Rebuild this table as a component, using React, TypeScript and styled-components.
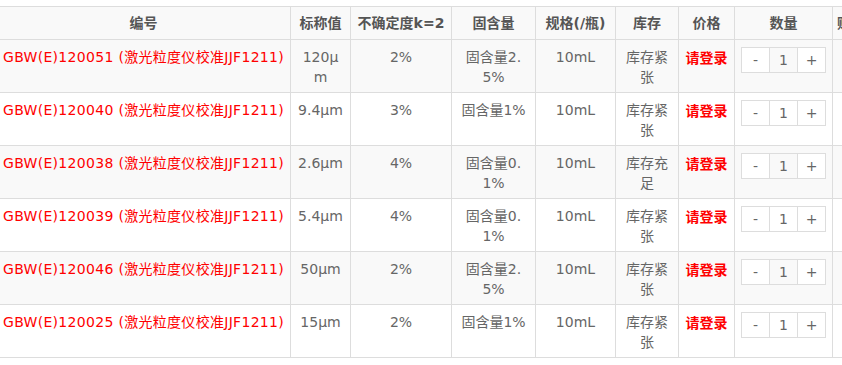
import styled, { createGlobalStyle } from 'styled-components';

const GlobalStyle = createGlobalStyle`
	html, body {
		margin: 0;
		padding: 0;
		background: #fff;
		overflow: hidden;
	}
	body {
		font-family: "DejaVu Sans", "Noto Sans CJK SC", sans-serif;
		font-size: 14px;
		color: #666;
	}
`;

const Page = styled.div`
	width: 842px;
	height: 365px;
	overflow: hidden;
	padding-top: 6px;
	box-sizing: border-box;
`;

const Table = styled.table`
	margin-left: -4px;
	border-collapse: collapse;
	table-layout: fixed;
	width: 946px;
`;

const HeadCell = styled.th<{ $align?: string }>`
	border: 1px solid #ddd;
	background: #f9f9f9;
	color: #555;
	font-weight: bold;
	line-height: 20px;
	padding: 6px 4px;
	text-align: ${(p) => p.$align || 'center'};
	white-space: nowrap;
	overflow: hidden;
`;

const Row = styled.tr<{ $striped: boolean }>`
	background: ${(p) => (p.$striped ? '#f9f9f9' : '#fff')};
`;

const Cell = styled.td<{ $align?: string }>`
	border: 1px solid #ddd;
	vertical-align: top;
	line-height: 20px;
	padding: 7px 6px 5px;
	text-align: ${(p) => p.$align || 'center'};
	white-space: nowrap;
	overflow: hidden;
`;

const ProductLink = styled.span`
	color: #f00;
	letter-spacing: 0.3px;
`;

const Login = styled.span`
	color: #f00;
	font-weight: bold;
	font-family: "Noto Sans CJK SC", sans-serif;
`;

const Counter = styled.div`
	display: inline-flex;
	border: 1px solid #ddd;
	height: 24px;
	vertical-align: top;
`;

const CountBtn = styled.button`
	width: 27px;
	height: 24px;
	border: none;
	padding: 0;
	background: #fff;
	color: #666;
	font-family: inherit;
	font-size: 14px;
	line-height: 24px;
`;

const CountValue = styled.span`
	width: 27px;
	height: 24px;
	border-left: 1px solid #ddd;
	border-right: 1px solid #ddd;
	text-align: center;
	line-height: 24px;
	color: #666;
`;

type Item = {
	code: string;
	value: string[];
	uncertainty: string;
	content: string[];
	spec: string;
	stock: string[];
};

const items: Item[] = [
	{ code: 'GBW(E)120051', value: ['120μ', 'm'], uncertainty: '2%', content: ['固含量2.', '5%'], spec: '10mL', stock: ['库存紧', '张'] },
	{ code: 'GBW(E)120040', value: ['9.4μm'], uncertainty: '3%', content: ['固含量1%'], spec: '10mL', stock: ['库存紧', '张'] },
	{ code: 'GBW(E)120038', value: ['2.6μm'], uncertainty: '4%', content: ['固含量0.', '1%'], spec: '10mL', stock: ['库存充', '足'] },
	{ code: 'GBW(E)120039', value: ['5.4μm'], uncertainty: '4%', content: ['固含量0.', '1%'], spec: '10mL', stock: ['库存紧', '张'] },
	{ code: 'GBW(E)120046', value: ['50μm'], uncertainty: '2%', content: ['固含量2.', '5%'], spec: '10mL', stock: ['库存紧', '张'] },
	{ code: 'GBW(E)120025', value: ['15μm'], uncertainty: '2%', content: ['固含量1%'], spec: '10mL', stock: ['库存紧', '张'] },
];

const Lines = ({ lines }: { lines: string[] }) => (
	<>
		{lines.map((l, i) => (
			<div key={i}>{l}</div>
		))}
	</>
);

const App = () => {
	return (
		<Page>
			<GlobalStyle />
			<Table>
				<colgroup>
					<col style={{ width: 294 }} />
					<col style={{ width: 60 }} />
					<col style={{ width: 101 }} />
					<col style={{ width: 84 }} />
					<col style={{ width: 80 }} />
					<col style={{ width: 63 }} />
					<col style={{ width: 56 }} />
					<col style={{ width: 98 }} />
					<col style={{ width: 110 }} />
				</colgroup>
				<thead>
					<tr>
						<HeadCell>编号</HeadCell>
						<HeadCell>标称值</HeadCell>
						<HeadCell>不确定度k=2</HeadCell>
						<HeadCell>固含量</HeadCell>
						<HeadCell>规格(/瓶)</HeadCell>
						<HeadCell>库存</HeadCell>
						<HeadCell>价格</HeadCell>
						<HeadCell>数量</HeadCell>
						<HeadCell $align="left">购买</HeadCell>
					</tr>
				</thead>
				<tbody>
					{items.map((it, idx) => (
						<Row key={it.code} $striped={idx % 2 === 0}>
							<Cell $align="left">
								<ProductLink>{it.code} (激光粒度仪校准JJF1211)</ProductLink>
							</Cell>
							<Cell>
								<Lines lines={it.value} />
							</Cell>
							<Cell>{it.uncertainty}</Cell>
							<Cell>
								<Lines lines={it.content} />
							</Cell>
							<Cell>{it.spec}</Cell>
							<Cell>
								<Lines lines={it.stock} />
							</Cell>
							<Cell>
								<Login>请登录</Login>
							</Cell>
							<Cell>
								<Counter>
									<CountBtn>-</CountBtn>
									<CountValue>1</CountValue>
									<CountBtn>+</CountBtn>
								</Counter>
							</Cell>
							<Cell />
						</Row>
					))}
				</tbody>
			</Table>
		</Page>
	);
};

export default App;
